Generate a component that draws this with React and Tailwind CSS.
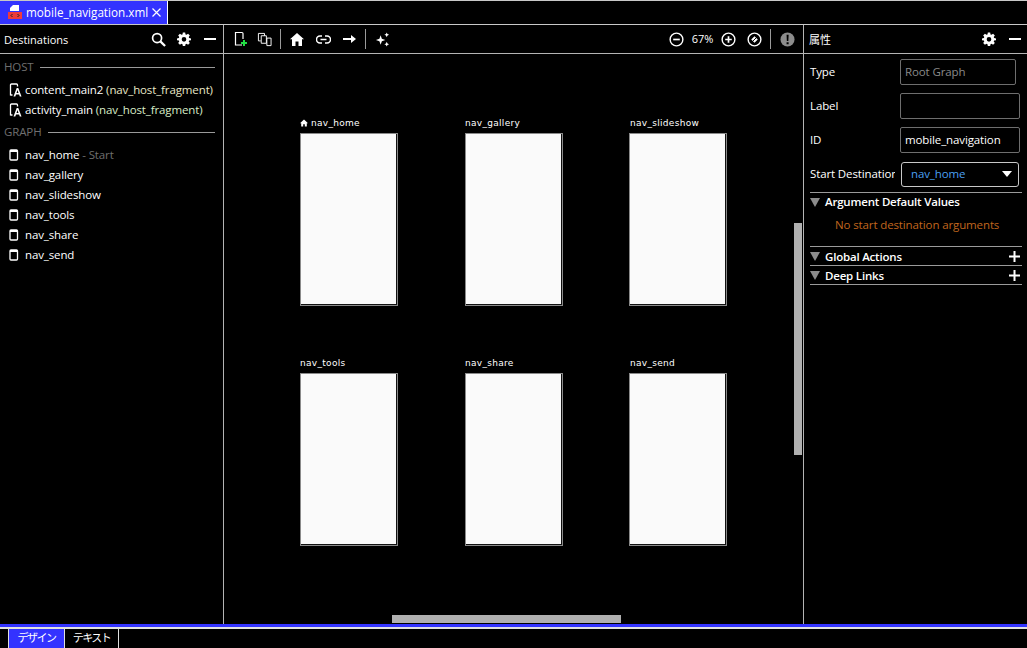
const FONT = "font-['Open_Sans','Noto_Sans_CJK_JP',sans-serif]";
const TXT = "text-[11.5px] tracking-[-0.12px]";

const Gear = ({ className = "" }) => (
  <svg viewBox="0 0 24 24" width="15" height="15" className={className} fill="#fff">
    <path fillRule="evenodd" d="M10 1h4l.6 3.2 1.700.7L19 3l3 3-1.900 2.700.7 1.700L24 11v3l-3.200.6-.7 1.700L22 19l-3 3-2.700-1.900-1.700.7L14 24h-4l-.6-3.200-1.700-.7L5 22l-3-3 1.900-2.700-.7-1.700L0 14v-3l3.200-.6.7-1.700L2 6l3-3 2.700 1.900 1.700-.7zM12 8.500a4 4 0 1 0 0 8 4 4 0 0 0 0-8z" />
  </svg>
);
const Search = () => (
  <svg viewBox="0 0 16 16" width="15" height="15" fill="none" stroke="#fff">
    <circle cx="6.500" cy="6.500" r="4.800" strokeWidth="1.800" />
    <path d="M10 10l5 5" strokeWidth="2.400" />
  </svg>
);
const FragIcon = () => (
  <svg viewBox="0 0 14 14" width="14" height="14" className="shrink-0" fill="none">
    <path d="M1.500 12.500V2a1 1 0 0 1 1-1h5a1 1 0 0 1 1 1v1.500M1.500 12h2" stroke="#fff" strokeWidth="1.300" />
    <path d="M4.500 13.500L7.700 5h1.600l3.200 8.500h-1.700l-.7-2H7l-.7 2zM7.500 10h2L8.500 7z" fill="#fff" fillRule="evenodd" />
  </svg>
);
const PhoneIcon = () => (
  <svg viewBox="0 0 10 12" width="10" height="12" className="shrink-0" fill="none">
    <rect x="1" y="1" width="7.500" height="10" rx="1" stroke="#fff" strokeWidth="1.300" />
    <rect x="1" y="1" width="7.500" height="2" fill="#fff" />
  </svg>
);
const CircleBtn = ({ children }) => (
  <svg viewBox="0 0 16 16" width="15" height="15" fill="none" stroke="#fff" className="shrink-0">
    <circle cx="8" cy="8" r="6.800" strokeWidth="1.500" />
    {children}
  </svg>
);
const Caret = () => (
  <svg viewBox="0 0 10 9" width="10" height="9" className="shrink-0"><path d="M0 0h10L5 9z" fill="#8c8c8c" /></svg>
);
const Plus = () => (
  <svg viewBox="0 0 11 11" width="11" height="11" className="mr-[2px] shrink-0"><path d="M4.500 0h2v4.500H11v2H6.500V11h-2V6.500H0v-2h4.500z" fill="#fff" /></svg>
);
const VSep = ({ className = "mx-[9px]" }) => <span className={`w-px h-5 bg-[#9a9a9a] ${className}`} />;
const Minus2 = () => <span className="block w-3 h-0.5 bg-white ml-[13px]" />;

const Section = ({ title }) => (
  <div className="flex items-center h-5 pl-1 pr-2 gap-[6px]">
    <span className={`text-[#6f6f6f] ${TXT}`}>{title}</span>
    <span className="h-px flex-1 bg-[#9a9a9a]" />
  </div>
);
const Row = ({ icon, children }) => (
  <div className={`flex items-center h-5 pl-[9px] gap-[2px] ${TXT} text-white whitespace-nowrap`}>
    {icon}
    <span>{children}</span>
  </div>
);

const Node = ({ name, home, indent }) => (
  <div className="w-[98px]">
    <div className={`h-[17px] pb-[3px] flex items-center gap-[3px] text-white text-[9px] tracking-[0.3px] font-['DejaVu_Sans',sans-serif] leading-none ${indent}`}>
      {home && (
        <svg viewBox="0 0 8 8" width="8" height="8"><path d="M4 .5L8 4.300H6.800V7.500H4.800V5.200H3.200V7.500H1.200V4.300H0z" fill="#fff" /></svg>
      )}
      <span>{name}</span>
    </div>
    <div className="h-[173px] bg-[#fafafa] border border-[#8a8a8a] shadow-[inset_-1px_-1px_0_#111]" />
  </div>
);

const Field = ({ label, w = "w-[120px]", color = "text-white", value }) => (
  <div className={`flex items-center h-[34px] ${TXT} text-white`}>
    <span className="w-[90px] shrink-0">{label}</span>
    <div className={`${w} h-[26px] border border-[#6e6e6e] rounded-[2px] flex items-center px-1 ${color}`}>{value}</div>
  </div>
);
const Collapse = ({ title, plus, pad = "pt-[1px]" }) => (
  <div className={`flex items-center h-[19px] ${pad} border-t border-[#9a9a9a] gap-[5px] ${TXT} font-semibold text-white`}>
    <Caret />
    <span className="flex-1 tracking-[-0.2px]">{title}</span>
    {plus && <Plus />}
  </div>
);

const INDENT = ["", "pl-[0.5px]", "pl-[1px]"];

export default function App() {
  return (
    <div className={`${FONT} w-[1027px] h-[648px] bg-black flex flex-col overflow-hidden`}>
      <div className="h-[25px] shrink-0 border-t border-b border-[#c8c8c8] flex">
        <div className="w-[168px] h-full bg-[#3333ff] border-r border-white flex items-center pl-[8px] gap-[4px] text-white text-[11.700px]">
          <svg viewBox="0 0 14 15" width="14" height="15" className="shrink-0">
            <path d="M5 0h6v6H2V3z" fill="#fff" />
            <rect x="0" y="7" width="14" height="7" fill="#ee3b3b" />
            <path d="M4.500 9L3 10.500 4.500 12M9.500 9L11 10.500 9.500 12" stroke="#222" fill="none" />
          </svg>
          <span className="flex-1 whitespace-nowrap">mobile_navigation.xml</span>
          <svg viewBox="0 0 9 9" width="9" height="9" className="mr-[6px] shrink-0"><path d="M.5.5l8 8M8.500.5l-8 8" stroke="#fff" strokeWidth="1.200" /></svg>
        </div>
      </div>

      <div className="flex-1 flex min-h-0">
        <aside className="w-[224px] shrink-0 border-r border-[#b4b4b4] flex flex-col">
          <div className="h-[29px] shrink-0 border-b border-[#b4b4b4] flex items-center pl-1 pr-[7px] text-white text-[11px]">
            <span className="flex-1 pt-[2px]">Destinations</span>
            <Search />
            <Gear className="w-[14px] h-[14px] ml-[11px]" />
            <Minus2 />
          </div>
          <div className="pt-[3px]">
            <Section title="HOST" />
            <div className="pt-[3px] pb-[2px]">
              <Row icon={<FragIcon />}>content_main2 <span className="text-[#e8e8c8]">(nav_host_fragment)</span></Row>
              <Row icon={<FragIcon />}>activity_main <span className="text-[#d8ecc8]">(nav_host_fragment)</span></Row>
            </div>
            <Section title="GRAPH" />
            <div className="pt-[3px]">
              {["nav_home", "nav_gallery", "nav_slideshow", "nav_tools", "nav_share", "nav_send"].map((n, i) => (
                <Row key={n} icon={<span className="w-[14px] flex"><PhoneIcon /></span>}>
                  {n}{i === 0 && <span className="text-[#6f6f6f]"> - Start</span>}
                </Row>
              ))}
            </div>
          </div>
        </aside>

        <main className="w-[580px] shrink-0 border-r border-[#b4b4b4] flex flex-col">
          <div className="h-[29px] shrink-0 border-b border-[#b4b4b4] flex items-center pl-[10px] pr-[8px]">
            <svg viewBox="0 0 14 16" width="14" height="16" fill="none" className="mr-[9px]">
              <path d="M8 14H1.500V1.500h6.500a1 1 0 0 1 1 1V8" stroke="#fff" strokeWidth="1.200" />
              <path d="M9 9h2v2h2v2h-2v2H9v-2H7v-2h2z" fill="#22dd44" />
            </svg>
            <svg viewBox="0 0 16 15" width="15" height="15" fill="none" stroke="#fff">
              <path d="M8 3.500V1H1.500v8H4" />
              <path d="M4.500 3.500H10v8H4.500z" />
              <path d="M10.500 6H15v8h-4.500z" />
            </svg>
            <VSep className="ml-[8px] mr-[9px]" />
            <svg viewBox="0 0 14 13" width="14" height="13" className="mr-[12px]"><path d="M7 0l7 6.300h-2V13H8.500V8.500h-3V13H2V6.300H0z" fill="#fff" /></svg>
            <svg viewBox="0 0 15 9" width="15" height="9" fill="none" stroke="#fff" strokeWidth="1.500" className="mr-[12px]">
              <path d="M6 1H4a3.500 3.500 0 0 0 0 7h2M9 1h2a3.500 3.500 0 0 1 0 7H9M4.500 4.500h6" />
            </svg>
            <svg viewBox="0 0 13 10" width="13" height="10"><path d="M0 4h8V1l5 4-5 4V6H0z" fill="#fff" /></svg>
            <VSep />
            <svg viewBox="0 0 16 15" width="15" height="15"><path d="M6 3l1.300 3.700L11 8 7.300 9.300 6 13 4.700 9.300 1 8l3.700-1.300zM12.500 0l.8 1.700 1.700.8-1.700.8-.8 1.700-.8-1.700-1.700-.8 1.700-.8zM12.500 10l.8 1.700 1.700.8-1.700.8-.8 1.700-.8-1.700-1.700-.8 1.700-.8z" fill="#fff" /></svg>
            <div className="flex-1" />
            <CircleBtn><path d="M4.500 8h7" strokeWidth="1.800" /></CircleBtn>
            <span className="w-[37px] text-center text-[11px] tracking-[-0.1px] text-white">67%</span>
            <CircleBtn><path d="M4.500 8h7M8 4.500v7" strokeWidth="1.800" /></CircleBtn>
            <span className="w-[11px]" />
            <CircleBtn>
              <path d="M4.500 8L8 4.500 11.500 8 8 11.500z" fill="#fff" stroke="none" />
              <path d="M5 11l6-6" stroke="#000" strokeWidth="1" />
            </CircleBtn>
            <VSep className="ml-[8px] mr-[9px]" />
            <svg viewBox="0 0 16 16" width="15" height="15"><circle cx="8" cy="8" r="7.500" fill="#8c8c8c" /><path d="M7 3h2.200l-.3 6.500H7.300zM7 10.800h2.200V13H7z" fill="#000" /></svg>
          </div>
          <div className="relative flex-1 pt-[62px] pl-[76px]">
            <div className="grid grid-cols-[98px_98px_98px] gap-x-[66.500px] gap-y-[50px]">
              {["nav_home", "nav_gallery", "nav_slideshow", "nav_tools", "nav_share", "nav_send"].map((n, i) => (
                <Node key={n} name={n} home={i === 0} indent={INDENT[i % 3]} />
              ))}
            </div>
            <div className="absolute right-[1px] top-[169px] w-2 h-[232px] bg-[#b0b0b0]" />
            <div className="absolute left-[168px] bottom-[1px] h-2 w-[229px] bg-[#b0b0b0]" />
          </div>
        </main>

        <aside className="flex-1 flex flex-col min-w-0">
          <div className="h-[29px] shrink-0 border-b border-[#b4b4b4] flex items-center pl-[5px] pr-[6px] text-white text-[11px]">
            <span className="flex-1 pt-[2px]">属性</span>
            <Gear className="w-[14px] h-[14px]" />
            <Minus2 />
          </div>
          <div className="pl-[6px] pr-[5px] pt-[1px]">
            <Field label="Type" w="w-[116px]" color="text-[#8a8a8a]" value="Root Graph" />
            <Field label="Label" value="" />
            <Field label="ID" value="mobile_navigation" />
            <div className={`flex items-center h-[34px] ${TXT} text-white whitespace-nowrap`}>
              <span className="w-[85px] shrink-0 overflow-hidden mr-[6px]">Start Destination</span>
              <div className="w-[118px] h-[25px] border border-[#c8c8c8] rounded-[3px] flex items-center pl-[9px] pr-[6px] text-[#4a9ff0]">
                <span className="flex-1">nav_home</span>
                <svg viewBox="0 0 10 6" width="10" height="6"><path d="M0 0h10L5 6z" fill="#fff" /></svg>
              </div>
            </div>
            <div className="mt-[1px]">
              <Collapse title="Argument Default Values" pad="" />
            </div>
            <div className={`h-[35px] pt-[5px] pl-[25px] ${TXT} text-[#c0661e]`}>No start destination arguments</div>
            <Collapse title="Global Actions" plus />
            <Collapse title="Deep Links" plus />
            <div className="h-px bg-[#9a9a9a]" />
          </div>
        </aside>
      </div>

      <div className="h-[24px] shrink-0 border-t-[3px] border-[#3333ff] flex flex-col">
        <div className="h-[21px] border-t-[2px] border-[#e0e0e0] flex pl-[8px] text-white text-[11px] tracking-[-1.500px]">
          <div className="w-[56px] bg-[#3333ff] border-l border-[#e0e0e0] flex items-center justify-center">デザイン</div>
          <div className="w-[55px] border-x border-[#e0e0e0] flex items-center justify-center">テキスト</div>
        </div>
      </div>
    </div>
  );
}
